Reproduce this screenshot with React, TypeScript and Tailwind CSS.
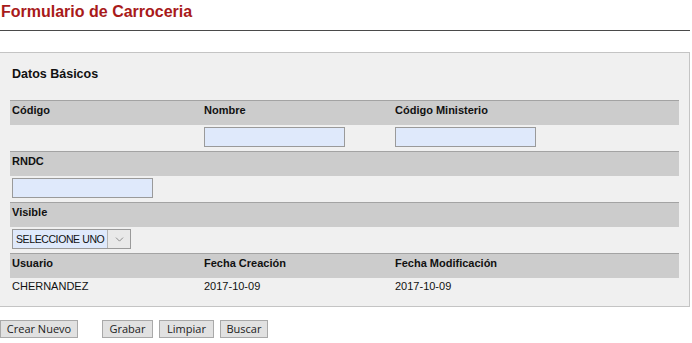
import { ChevronDown } from 'lucide-react';

const label = 'text-[11px] leading-[13px] font-bold text-[#111]';
const value = 'text-[11px] leading-[13px] text-[#111]';
const input =
  'block h-[20px] w-[141px] border border-[#9a9a9a] bg-[#dfe9fb] outline-none';

function HeaderRow({ cols }: { cols: string[] }) {
  return (
    <div className="grid h-[25px] grid-cols-[192px_191px_1fr] border-t border-[#a3a3a3] bg-[#cccccc] pt-[3px]">
      {cols.map((c, i) => (
        <div key={i} className={`pl-[2px] ${label}`}>
          {c}
        </div>
      ))}
    </div>
  );
}

const buttons = [
  { text: 'Grabar', w: 'w-[51px]' },
  { text: 'Limpiar', w: 'w-[55px]' },
  { text: 'Buscar', w: 'w-[48px]' },
];

export default function App() {
  return (
    <div className="h-[343px] w-[692px] bg-white font-['Liberation_Sans',Arial,sans-serif]">
      {/* Title */}
      <div className="h-[31px] w-[690px] border-b border-[#4a4a4a] pl-px pt-[3px]">
        <h1 className="text-[16px] font-bold leading-[18px] text-[#a81a1a]">
          Formulario de Carroceria
        </h1>
      </div>

      {/* Panel */}
      <div className="mt-[21px] w-[690px] border-t border-r border-b border-[#c4c4c4] bg-[#f0f0f0] px-[10px]">
        <div className="h-[47px] pl-[2px] pt-[14px] text-[12.5px] font-bold leading-[14px] text-[#111]">
          Datos Básicos
        </div>

        <HeaderRow cols={['Código', 'Nombre', 'Código Ministerio']} />
        <div className="grid h-[26px] grid-cols-[192px_191px_1fr] pt-[2px]">
          <div />
          <div className="pl-[2px]">
            <input className={input} />
          </div>
          <div className="pl-[2px]">
            <input className={input} />
          </div>
        </div>

        <HeaderRow cols={['RNDC']} />
        <div className="h-[26px] pl-[2px] pt-[2px]">
          <input className={input} />
        </div>

        <HeaderRow cols={['Visible']} />
        <div className="h-[26px] pl-[2px] pt-[2px]">
          <div className="flex h-[20px] w-[119px] border border-[#9a9a9a] bg-[#dfe9fb]">
            <span className="flex-1 overflow-hidden whitespace-nowrap pl-[3px] pt-[3px] text-[10.5px] leading-[13px] tracking-[-0.4px] text-[#111]">
              SELECCIONE UNO
            </span>
            <span className="flex w-[23px] items-center justify-center border-l border-[#b5b5b5] bg-[#e9e9e9]">
              <ChevronDown className="h-[13px] w-[13px] text-[#777]" strokeWidth={1.5} />
            </span>
          </div>
        </div>

        <HeaderRow cols={['Usuario', 'Fecha Creación', 'Fecha Modificación']} />
        <div className="grid h-[28px] grid-cols-[192px_191px_1fr] pt-[2px]">
          <div className={`pl-[2px] ${value}`}>CHERNANDEZ</div>
          <div className={`pl-[2px] ${value}`}>2017-10-09</div>
          <div className={`pl-[2px] ${value}`}>2017-10-09</div>
        </div>
      </div>

      {/* Buttons */}
      <div className="mt-[13px] flex font-['Open_Sans',sans-serif] text-[11px] text-[#222]">
        <button className="h-[18px] w-[78px] border border-[#a9a9a9] bg-[#e1e1e1] leading-[16px]">
          Crear Nuevo
        </button>
        <div className="ml-[24px] flex gap-[6px]">
          {buttons.map((b) => (
            <button
              key={b.text}
              className={`h-[18px] ${b.w} border border-[#a9a9a9] bg-[#e1e1e1] leading-[16px]`}
            >
              {b.text}
            </button>
          ))}
        </div>
      </div>
    </div>
  );
}
